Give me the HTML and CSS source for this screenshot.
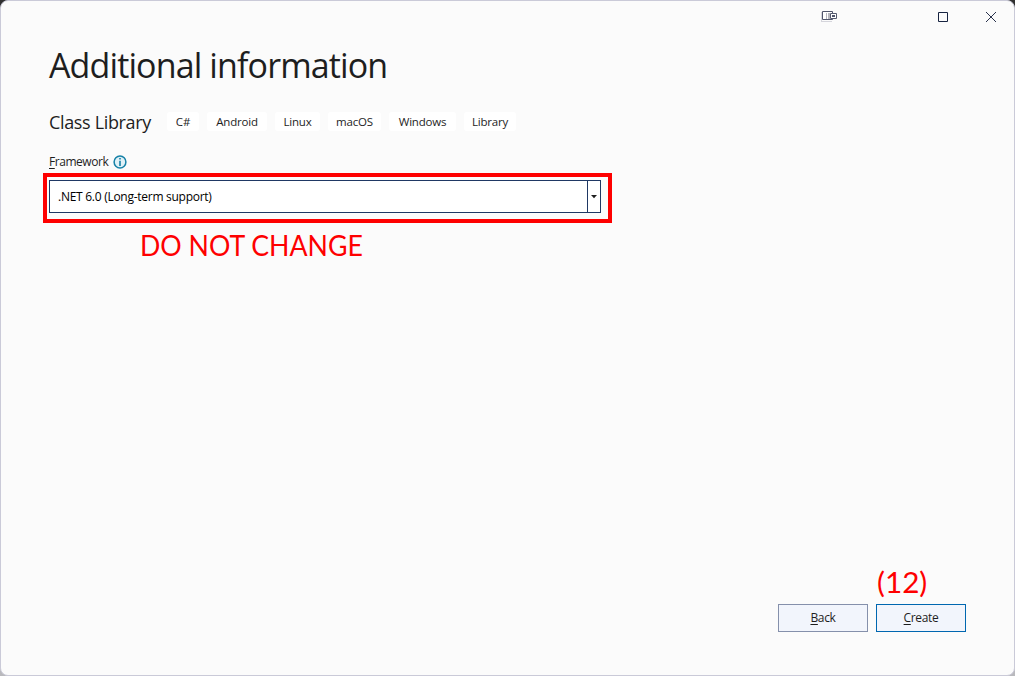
FILE: index.html
```html
<!DOCTYPE html>
<html lang="en">
<head>
<meta charset="utf-8">
<title>Additional information</title>
<link rel="stylesheet" href="styles.css">
</head>
<body>
<div class="window">
  <header class="titlebar">
    <svg class="dock-icon" width="17" height="12" viewBox="0 0 17 12"><path d="M0 1h1v9H0zM0 10h11v1H0z" fill="#d5d5dc"/><path d="M1.5.5h10v8h-10z" fill="#fff" stroke="#50556b"/><path d="M5 2h1v6H5zM7 2h2v6H7z" fill="#b5b5bd"/><path d="M9.5 2.5h6v5h-6z" fill="#fff" stroke="#555a6e"/><path d="M11 4h3v2h-3z" fill="#50556b"/></svg>
    <svg class="max-icon" width="10" height="10" viewBox="0 0 10 10"><path d="M.5.5h9v9h-9z" fill="none" stroke="#172341"/></svg>
    <svg class="close-icon" width="10" height="10" viewBox="0 0 10 10"><path d="M0 0l10 10M10 0L0 10" stroke="#29324c" fill="none"/></svg>
  </header>
  <main class="content">
    <h1 class="title">Additional information</h1>
    <div class="template">
      <h2 class="name">Class Library</h2>
      <ul class="tags">
        <li class="tag cs">C#</li><li class="tag android">Android</li><li class="tag linux">Linux</li><li class="tag macos">macOS</li><li class="tag windows">Windows</li><li class="tag library">Library</li>
      </ul>
    </div>
    <div class="label"><span class="label-text"><u>F</u>ramework</span>
      <svg width="14" height="14" viewBox="0 0 14 14"><circle cx="7" cy="7" r="5.9" fill="#e0f1f7" stroke="#1681a7" stroke-width="1.5"/><path d="M6.2 3h1.6v1.6H6.2zM6.2 5.8h1.6V11H6.2z" fill="#1681a7"/></svg>
    </div>
    <div class="highlight">
      <div class="select"><span class="value">.NET 6.0 (Long-term support)</span><span class="arrow"><svg width="6" height="4" viewBox="0 0 6 4"><path d="M0 0h6L3 3.2z" fill="#1e1e1e"/></svg></span></div>
    </div>
    <p class="note">DO NOT CHANGE</p>
  </main>
  <footer class="footer">
    <p class="step">(12)</p>
    <div class="buttons">
      <button class="btn"><u>B</u>ack</button>
      <button class="btn primary"><u>C</u>reate</button>
    </div>
  </footer>
</div>
</body>
</html>
```
FILE: styles.css
```css
* { box-sizing: border-box; margin: 0; padding: 0; }
body { width: 1015px; height: 676px; overflow: hidden; background: linear-gradient(#303030 0 20px, #b9b9bd 20px); font: 12px/16px "Open Sans", "Noto Sans", sans-serif; color: #1e1e1e; }
.window { width: 1015px; height: 676px; display: flex; flex-direction: column; border: 1px solid #cacad8; border-radius: 8px; background: #fbfbfb; }
.titlebar { height: 42px; display: flex; justify-content: flex-end; padding: 11px 18px 0 0; }
.dock-icon { margin: -1px 100px 0 0; }
.max-icon { margin-right: 38px; }
.close-icon { overflow: visible; }
.content { flex: 1; padding-left: 42px; }
.title { height: 44px; margin-left: 6px; font-size: 34px; line-height: 44px; font-weight: 400; letter-spacing: -.88px; white-space: nowrap; }
.template { display: flex; align-items: center; height: 26px; margin: 22px 0 0 6px; }
.name { width: 118px; font-size: 18px; line-height: 26px; font-weight: 400; letter-spacing: -.34px; white-space: nowrap; }
.tags { display: flex; gap: 8px; list-style: none; margin-top: -1px; }
.tag { height: 19px; border-radius: 3px; background: #fff; text-align: center; font-size: 11.5px; line-height: 19px; letter-spacing: -.2px; white-space: nowrap; }
.cs { width: 32px; }
.android { width: 60px; }
.linux { width: 45px; }
.macos { width: 53px; }
.windows { width: 67px; }
.library { width: 52px; }
.label { display: flex; align-items: center; height: 16px; margin: 19px 0 0 6px; font-size: 12px; }
.label-text { width: 64px; white-space: nowrap; letter-spacing: -.45px; }
u { text-underline-offset: 2px; text-decoration-thickness: 1px; text-decoration-skip-ink: none; }
.highlight { width: 569px; height: 50px; margin-top: 3px; border: 4px solid #fe0000; padding: 3px 7px 5px 2px; }
.select { display: flex; height: 33px; border: 1px solid #1f3864; background: #fff; color: #000; }
.value { flex: 1; padding-left: 8px; line-height: 31px; white-space: nowrap; letter-spacing: -.27px; }
.arrow { width: 14px; display: flex; align-items: center; justify-content: center; margin-right: -1px; padding-right: 1px; border-left: 1px solid #1f3864; }
.note, .step { font: 28px/34px Lato, sans-serif; color: #fe0000; white-space: nowrap; transform-origin: 0 50%; }
.note { margin: 5px 0 0 97px; transform: scaleX(.954); }
.footer { padding: 0 48px 43px; }
.step { width: 60px; margin: 0 0 0 828px; height: 34px; line-height: 33px; transform: scaleX(1.06); }
.buttons { display: flex; justify-content: flex-end; gap: 8px; margin-top: 4px; }
.btn { width: 90px; height: 28px; border: 1px solid #8590ab; border-radius: 0; background: #f2f5fc; color: #1e1e1e; font: 12px/16px "Open Sans", sans-serif; letter-spacing: -.35px; }
.primary { border-color: #0067b0; }
```
